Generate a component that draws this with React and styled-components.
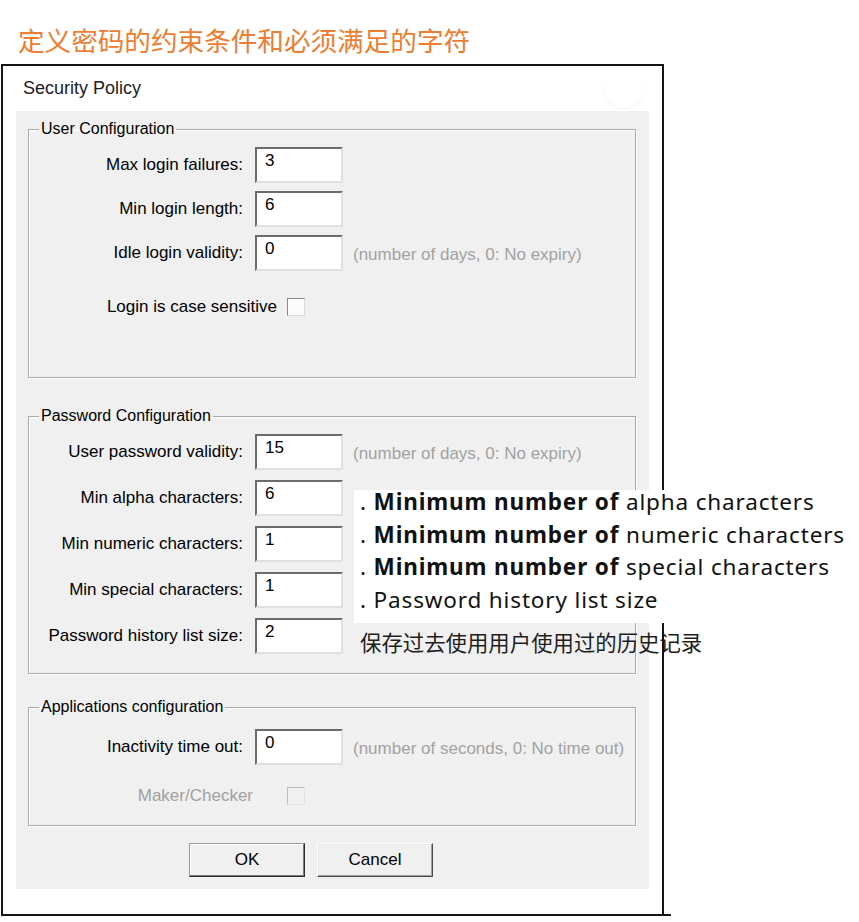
import React from 'react';
import styled, { createGlobalStyle } from 'styled-components';

const GlobalStyle = createGlobalStyle`
  * { box-sizing: border-box; }
  body {
    margin: 0;
    background: #fff;
    font-family: "Liberation Sans", Arial, sans-serif;
  }
`;

const Page = styled.div`
  position: relative;
  width: 859px;
  height: 922px;
  padding-top: 24px;
  overflow: hidden;
`;

const Heading = styled.h1`
  margin: 0 0 8px 18px;
  font-family: "Noto Sans CJK SC", sans-serif;
  font-size: 26.6px;
  line-height: 32px;
  font-weight: 400;
  color: #ed7d31;
`;

const Frame = styled.div`
  position: relative;
  margin-left: 1px;
  width: 663px;
  padding: 2px;

  &::after {
    content: '';
    position: absolute;
    inset: 0;
    border: 2px solid #141414;
    z-index: 2;
    pointer-events: none;
  }

  &::before {
    content: '';
    position: absolute;
    right: -7px;
    bottom: 0;
    width: 9px;
    height: 2px;
    background: #141414;
    z-index: 2;
  }
`;

const TitleBar = styled.div`
  height: 45px;
  display: flex;
  align-items: center;
  justify-content: space-between;
  padding: 0 19px 0 20px;
`;

const TitleText = styled.span`
  font-size: 18px;
  color: #1c1c28;
`;

const Bubble = styled.span`
  width: 38px;
  height: 38px;
  border-radius: 50%;
  background: #fff;
  box-shadow: 0 1px 2px rgba(0, 0, 0, 0.06);
`;

const Panel = styled.div`
  margin: 0 12px 25px 13px;
  width: 633px;
  height: 778px;
  background: #f0f0f0;
  padding: 8px 13px 0 12px;
  display: flex;
  flex-direction: column;
`;

const Group = styled.fieldset`
  margin: ${(p) => p.$mt}px 0 0;
  padding: ${(p) => p.$pad}px 0 0;
  height: ${(p) => p.$h}px;
  min-width: 0;
  border: 1px solid #a9a9a9;
  box-shadow: inset 1px 1px 0 #fff, 1px 1px 0 #fff;
`;

const Legend = styled.legend`
  margin-left: 10px;
  padding: 0 2px;
  font-size: 16px;
  line-height: 20px;
  color: #000;
`;

const Rows = styled.div`
  display: flex;
  flex-direction: column;
  gap: ${(p) => p.$gap}px;
`;

const Row = styled.div`
  display: flex;
  align-items: center;
  height: 36px;
`;

const Label = styled.span`
  width: 214px;
  margin-right: 12px;
  text-align: right;
  font-size: 17px;
  white-space: nowrap;
  color: #000;
`;

const Field = styled.input`
  width: 88px;
  height: 36px;
  border-style: solid;
  border-width: 2px;
  border-color: #6b6b6b #e0e0e0 #e0e0e0 #6b6b6b;
  background: #fff;
  padding: 2px 8px 10px;
  font-family: "Liberation Sans", Arial, sans-serif;
  font-size: 17px;
  line-height: 20px;
  color: #000;
  outline: none;
`;

const Hint = styled.span`
  margin-left: 10px;
  margin-top: 3px;
  font-size: 17px;
  white-space: nowrap;
  color: #a2a2a2;
`;

const CheckRow = styled.div`
  display: flex;
  align-items: center;
  height: 36px;
  margin-top: ${(p) => p.$mt || 0}px;
`;

const CheckLabel = styled.span`
  width: ${(p) => p.$w}px;
  margin-right: ${(p) => p.$gap}px;
  text-align: right;
  font-size: 17px;
  white-space: nowrap;
  color: ${(p) => (p.$disabled ? '#a0a0a0' : '#000')};
`;

const Box = styled.span`
  width: 18px;
  height: 18px;
  border: 1px solid;
  border-color: ${(p) => (p.$disabled ? '#bdbdbd #e4e4e4 #e4e4e4 #bdbdbd' : '#8a8a8a #dadada #dadada #8a8a8a')};
  background: ${(p) => (p.$disabled ? '#f0f0f0' : '#fbfbfb')};
`;

const ButtonRow = styled.div`
  display: flex;
  gap: 12px;
  margin-top: 17px;
  padding-left: 161px;
`;

const Button = styled.button`
  width: 116px;
  height: 34px;
  padding: 0;
  background: #f0f0f0;
  font-family: "Liberation Sans", Arial, sans-serif;
  font-size: 17px;
  color: #000;
  border: 1px solid;
  border-color: ${(p) => (p.$primary ? '#9a9a9a #2b2b2b #2b2b2b #9a9a9a' : '#ffffff #4a4a4a #4a4a4a #ffffff')};
  box-shadow: ${(p) => (p.$primary
    ? 'inset -1px -1px 0 #7a7a7a, inset 1px 1px 0 #ffffff'
    : 'inset -1px -1px 0 #a0a0a0, inset 1px 1px 0 #e8e8e8')};
`;

const NoteCard = styled.div`
  position: absolute;
  left: 354px;
  top: 490px;
  width: 505px;
  height: 133px;
  padding-left: 6px;
  background: #fff;
  z-index: 3;
  font-family: "Noto Sans", sans-serif;
  font-size: 22.5px;
  line-height: 32.5px;
  letter-spacing: 0.85px;
  color: #111;
`;

const NoteList = styled.div`
  margin-top: -4px;
`;

const NoteLine = styled.div`
  white-space: nowrap;
`;

const FootNote = styled.div`
  position: absolute;
  left: 360px;
  top: 627px;
  z-index: 1;
  font-family: "Noto Sans CJK SC", sans-serif;
  font-size: 21.4px;
  line-height: 30px;
  color: #1e1e1e;
  white-space: nowrap;
`;

const userFields = [
  { label: 'Max login failures:', value: '3' },
  { label: 'Min login length:', value: '6' },
  { label: 'Idle login validity:', value: '0', hint: '(number of days, 0: No expiry)' },
];

const passwordFields = [
  { label: 'User password validity:', value: '15', hint: '(number of days, 0: No expiry)' },
  { label: 'Min alpha characters:', value: '6' },
  { label: 'Min numeric characters:', value: '1' },
  { label: 'Min special characters:', value: '1' },
  { label: 'Password history list size:', value: '2' },
];

const notes = [
  { bold: 'Minimum number of', rest: ' alpha characters' },
  { bold: 'Minimum number of', rest: ' numeric characters' },
  { bold: 'Minimum number of', rest: ' special characters' },
  { rest: 'Password history list size' },
];

const InputRow = ({ label, value, hint }) => (
  <Row>
    <Label>{label}</Label>
    <Field readOnly value={value} />
    {hint && <Hint>{hint}</Hint>}
  </Row>
);

const App = () => (
  <Page>
    <GlobalStyle />
    <Heading>定义密码的约束条件和必须满足的字符</Heading>
    <Frame>
      <TitleBar>
        <TitleText>Security Policy</TitleText>
        <Bubble />
      </TitleBar>
      <Panel>
        <Group $mt={0} $pad={8} $h={259}>
          <Legend>User Configuration</Legend>
          <Rows $gap={8}>
            {userFields.map((f) => <InputRow key={f.label} {...f} />)}
          </Rows>
          <CheckRow $mt={18}>
            <CheckLabel $w={248} $gap={10}>Login is case sensitive</CheckLabel>
            <Box />
          </CheckRow>
        </Group>
        <Group $mt={28} $pad={8} $h={268}>
          <Legend>Password Configuration</Legend>
          <Rows $gap={10}>
            {passwordFields.map((f) => <InputRow key={f.label} {...f} />)}
          </Rows>
        </Group>
        <Group $mt={23} $pad={12} $h={129}>
          <Legend>Applications configuration</Legend>
          <InputRow label="Inactivity time out:" value="0" hint="(number of seconds, 0: No time out)" />
          <CheckRow $mt={13}>
            <CheckLabel $w={224} $gap={34} $disabled>Maker/Checker</CheckLabel>
            <Box $disabled />
          </CheckRow>
        </Group>
        <ButtonRow>
          <Button $primary>OK</Button>
          <Button>Cancel</Button>
        </ButtonRow>
      </Panel>
    </Frame>
    <NoteCard>
      <NoteList>
        {notes.map((n) => (
          <NoteLine key={n.rest}>
            .{' '}
            {n.bold && <b>{n.bold}</b>}
            {n.rest}
          </NoteLine>
        ))}
      </NoteList>
    </NoteCard>
    <FootNote>保存过去使用用户使用过的历史记录</FootNote>
  </Page>
);

export default App;
